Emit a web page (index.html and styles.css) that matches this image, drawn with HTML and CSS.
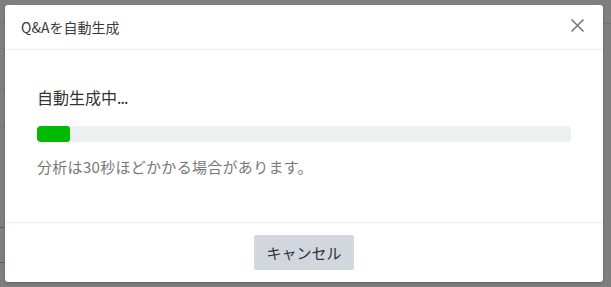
FILE: index.html
```html
<!DOCTYPE html>
<html lang="ja">
<head>
    <meta charset="UTF-8">
    <meta name="viewport" content="width=device-width, initial-scale=1.0">
    <title>Q&amp;Aを自動生成</title>
    <link rel="stylesheet" href="styles.css">
</head>
<body>
    <!-- Page behind the overlay -->
    <div class="backdrop">
        <div class="bg-line bg-line-1"></div>
        <div class="bg-line bg-line-2"></div>
        <div class="bg-line bg-line-3"></div>
        <div class="bg-line bg-line-4"></div>
        <div class="bg-line green bg-line-5"></div>
        <div class="bg-line green bg-line-6"></div>
        <div class="bg-line bg-line-r"></div>
    </div>

    <!-- Modal -->
    <div class="modal">
        <div class="modal-header">
            <span class="modal-title">Q&amp;Aを自動生成</span>
            <button class="close-button" aria-label="閉じる">
                <svg width="15" height="15" viewBox="0 0 15 15">
                    <path d="M1.5 1.5 L13.5 13.5 M13.5 1.5 L1.5 13.5" stroke="#7a7a7a" stroke-width="1.7" fill="none"/>
                </svg>
            </button>
        </div>
        <div class="modal-body">
            <div class="status">自動生成中<span class="dots">...</span></div>
            <div class="progress">
                <div class="progress-fill" style="width: 6.2%"></div>
            </div>
            <div class="note">分析は30秒ほどかかる場合があります。</div>
        </div>
        <div class="modal-footer">
            <button class="cancel-button">キャンセル</button>
        </div>
    </div>
</body>
</html>
```

FILE: styles.css
```css
body {
    margin: 0;
    padding: 5px 8px 5px 5px;
    background-color: #7f7f7f;
    font-family: "Noto Sans CJK JP", "Noto Sans", sans-serif;
    height: 287px;
    box-sizing: border-box;
    overflow: hidden;
}
.backdrop {
    position: absolute;
    top: 0;
    left: 0;
    width: 611px;
    height: 287px;
}
.bg-line {
    position: absolute;
    left: 0;
    width: 5px;
    height: 1px;
    background-color: #747474;
}
.bg-line-1 { top: 22px; }
.bg-line-2 { top: 48px; }
.bg-line-3 { top: 89px; }
.bg-line-4 { top: 126px; }
.bg-line-5 { top: 227px; }
.bg-line-6 { top: 262px; }
.bg-line.green {
    background-color: #2e7a2e;
}
.bg-line-r {
    top: 23px;
    left: 603px;
    width: 8px;
}
.modal {
    position: relative;
    width: 598px;
    height: 277px;
    background-color: #fff;
    border-radius: 3px;
    display: flex;
    flex-direction: column;
    box-shadow: 0 1px 3px rgba(0, 0, 0, 0.25);
}
.modal-header {
    height: 44px;
    display: flex;
    align-items: center;
    justify-content: space-between;
    padding: 0 18px 0 16px;
    border-bottom: 1px solid #ececec;
}
.modal-title {
    font-size: 14px;
    color: #3a3a3a;
    margin-top: -1px;
}
.close-button {
    background: none;
    border: none;
    padding: 0;
    width: 15px;
    height: 15px;
    cursor: pointer;
    margin-top: -4px;
}
.close-button svg {
    display: block;
}
.modal-body {
    flex: 1;
    padding: 35px 32px 0 32px;
}
.status {
    font-size: 16px;
    color: #333;
    line-height: 24px;
}
.dots {
    letter-spacing: -1px;
}
.progress {
    margin-top: 17px;
    height: 16px;
    background-color: #eeeff1;
    border-radius: 4px;
    overflow: hidden;
}
.progress-fill {
    height: 100%;
    background-color: #00b900;
    border-radius: 3px;
}
.note {
    margin-top: 15px;
    font-size: 15px;
    letter-spacing: 0.3px;
    color: #787878;
    line-height: 20px;
}
.modal-footer {
    height: 60px;
    border-top: 1px solid #ececec;
    display: flex;
    justify-content: center;
    padding-top: 12px;
    box-sizing: border-box;
}
.cancel-button {
    width: 100px;
    height: 35px;
    background-color: #d2d6dd;
    border: none;
    border-radius: 2px;
    font-family: "Noto Sans CJK JP", "Noto Sans", sans-serif;
    font-size: 15px;
    color: #333;
    cursor: pointer;
}
```
